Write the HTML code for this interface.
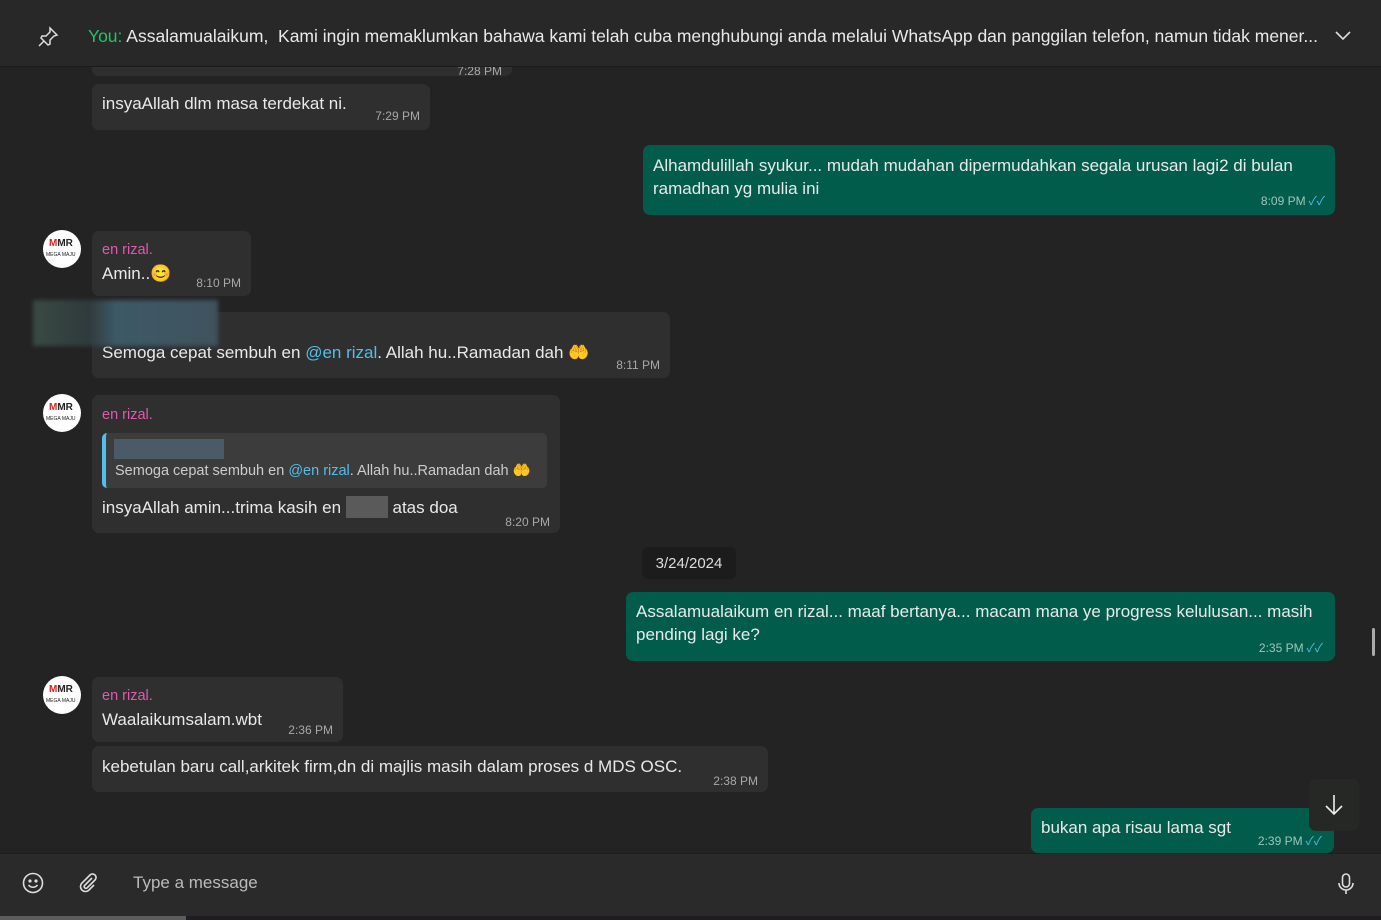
<!DOCTYPE html>
<html><head><meta charset="utf-8"><style>
*{margin:0;padding:0;box-sizing:border-box}
body{width:1381px;height:920px;overflow:hidden;background:#232323;font-family:"Liberation Sans","Noto Sans CJK SC",sans-serif;color:#e9e9e9;position:relative}
.abs{position:absolute}
.hdr{left:0;top:0;width:1381px;height:67px;background:#282828;border-bottom:1px solid #1c1c1c;z-index:5}
.b{position:absolute;border-radius:7px;font-size:17px;line-height:23px;padding:0 10px}
.in{background:#2f2f2f}
.out{background:#025c4b}
.t{position:absolute;font-size:12px;color:#a8a8a8}
.out .t{color:#9fc4bb}
.name{color:#e05ab0;font-size:14.5px}
.av{position:absolute;width:38px;height:38px;border-radius:50%;background:#fff;overflow:hidden}
.av span{position:absolute;left:6px;top:8px;font-size:10px;font-weight:bold;color:#222}
.av i{position:absolute;left:3px;top:22px;font-size:5px;font-style:normal;color:#222}
.chk{color:#53bdeb;font-size:12px;margin-left:3px}
.ft{left:0;top:853px;width:1381px;height:63px;background:#2a2a2a;border-top:1px solid #1e1e1e}
</style></head><body>
<div class="abs hdr">
<svg class="abs" style="left:36px;top:25px" width="24" height="24" viewBox="0 0 24 24" fill="none" stroke="#ddd" stroke-width="1.5"><path d="M14 3l7 7-3 1-4 4 0 4-2 1-7-7 1-2 4 0 4-4z M8 16l-5 5"/></svg>
<div class="abs" style="left:88px;top:26px;font-size:17.5px;white-space:nowrap;width:1230px;overflow:hidden"><span style="color:#25c064">You:</span> Assalamualaikum,&nbsp; Kami ingin memaklumkan bahawa kami telah cuba menghubungi anda melalui WhatsApp dan panggilan telefon, namun tidak mener...</div>
<svg class="abs" style="left:1334px;top:28px" width="18" height="14" viewBox="0 0 18 14" fill="none" stroke="#ddd" stroke-width="1.6"><path d="M2 4l7 7 7-7"/></svg>
</div>

<div class="b in" style="left:92px;top:30px;width:420px;height:46px"><div class="t" style="right:10px;top:30px">7:28 PM</div></div>

<div class="b in" style="left:92px;top:84px;width:338px;height:46px;padding-top:8px">insyaAllah dlm masa terdekat ni.<div class="t" style="right:10px;top:21px">7:29 PM</div></div>

<div class="b out" style="left:643px;top:145px;width:692px;height:70px;padding-top:9px">Alhamdulillah syukur... mudah mudahan dipermudahkan segala urusan lagi2 di bulan ramadhan yg mulia ini<div class="t" style="right:10px;top:45px">8:09 PM<span class="chk">✓✓</span></div></div>

<div class="av" style="left:43px;top:230px"><span><b style="color:#d22">M</b>MR</span><i>MEGA MAJU</i></div>
<div class="b in" style="left:92px;top:231px;width:159px;height:65px;padding-top:8px"><div class="name">en rizal.</div>Amin..😊<div class="t" style="right:10px;top:41px">8:10 PM</div></div>

<div class="b in" style="left:92px;top:312px;width:578px;height:66px;padding-top:29px">Semoga cepat sembuh en <span style="color:#53bdeb">@en rizal</span>. Allah hu..Ramadan dah 🤲<div class="t" style="right:10px;top:42px">8:11 PM</div></div>
<div class="abs" style="left:33px;top:300px;width:185px;height:46px;background:linear-gradient(90deg,#3a4a44 0,#2f3a3c 30%,#3d5966 45%,#40535e 100%);filter:blur(2px)"></div>

<div class="av" style="left:43px;top:394px"><span><b style="color:#d22">M</b>MR</span><i>MEGA MAJU</i></div>
<div class="b in" style="left:92px;top:395px;width:468px;height:138px;padding-top:9px"><div class="name">en rizal.</div>
<div class="abs" style="left:10px;top:38px;width:445px;height:55px;background:#3c3c3c;border-radius:5px;border-left:4px solid #53bdeb"><div class="abs" style="left:8px;top:6px;width:110px;height:20px;background:#4a5a66"></div><div class="abs" style="left:9px;top:27px;font-size:14.5px;color:#ccc;white-space:nowrap">Semoga cepat sembuh en <span style="color:#53bdeb">@en rizal</span>. Allah hu..Ramadan dah 🤲</div></div>
<div class="abs" style="left:10px;top:101px">insyaAllah amin...trima kasih en <span style="display:inline-block;width:42px;height:22px;background:#5a5a5a;vertical-align:-5px"></span> atas doa</div>
<div class="t" style="right:10px;top:116px">8:20 PM</div></div>

<div class="abs" style="left:642px;top:547px;width:94px;height:32px;background:#1c1c1c;border-radius:6px;font-size:15px;line-height:34px;text-align:center;color:#ddd">3/24/2024</div>

<div class="b out" style="left:626px;top:592px;width:709px;height:69px;padding-top:8px">Assalamualaikum en rizal... maaf bertanya... macam mana ye progress kelulusan... masih pending lagi ke?<div class="t" style="right:12px;top:45px">2:35 PM<span class="chk">✓✓</span></div></div>
<div class="abs" style="left:1372px;top:628px;width:3px;height:28px;background:#aaa;border-radius:2px"></div>

<div class="av" style="left:43px;top:676px"><span><b style="color:#d22">M</b>MR</span><i>MEGA MAJU</i></div>
<div class="b in" style="left:92px;top:677px;width:251px;height:65px;padding-top:8px"><div class="name">en rizal.</div>Waalaikumsalam.wbt<div class="t" style="right:10px;top:42px">2:36 PM</div></div>
<div class="b in" style="left:92px;top:746px;width:676px;height:46px;padding-top:9px">kebetulan baru call,arkitek firm,dn di majlis masih dalam proses d MDS OSC.<div class="t" style="right:10px;top:24px">2:38 PM</div></div>

<div class="b out" style="left:1031px;top:808px;width:303px;height:45px;padding-top:8px">bukan apa risau lama sgt<div class="t" style="right:12px;top:22px">2:39 PM<span class="chk">✓✓</span></div></div>
<div class="abs" style="left:1309px;top:779px;width:50px;height:52px;background:#262826;border-radius:7px"><svg class="abs" style="left:14px;top:14px" width="22" height="24" viewBox="0 0 22 24" fill="none" stroke="#eee" stroke-width="1.6"><path d="M11 2v19M3 13l8 8 8-8"/></svg></div>

<div class="abs ft">
<svg class="abs" style="left:22px;top:18px" width="22" height="22" viewBox="0 0 22 22" fill="none" stroke="#ddd" stroke-width="1.6"><circle cx="11" cy="11" r="9.5"/><circle cx="8" cy="9" r=".8" fill="#ddd"/><circle cx="14" cy="9" r=".8" fill="#ddd"/><path d="M6.5 13c2.5 3 6.5 3 9 0"/></svg>
<svg class="abs" style="left:77px;top:18px" width="22" height="22" viewBox="0 0 22 22" fill="none" stroke="#ddd" stroke-width="1.6"><path d="M15 6l-7.5 7.5a1.8 1.8 0 0 0 2.5 2.5L18 8a3.5 3.5 0 0 0-5-5L4.5 11.5a5 5 0 0 0 7 7L17 13"/></svg>
<div class="abs" style="left:133px;top:19px;font-size:17px;color:#bbb">Type a message</div>
<svg class="abs" style="left:1337px;top:18px" width="18" height="24" viewBox="0 0 18 24" fill="none" stroke="#ddd" stroke-width="1.6"><rect x="5.5" y="2" width="7" height="13" rx="3.5"/><path d="M2 11a7 7 0 0 0 14 0M9 18v4"/></svg>
</div>
<div class="abs" style="left:0;top:916px;width:1381px;height:4px;background:#1f1d22"></div>
<div class="abs" style="left:0;top:916px;width:186px;height:4px;background:#5c5c5c"></div>
</body></html>
